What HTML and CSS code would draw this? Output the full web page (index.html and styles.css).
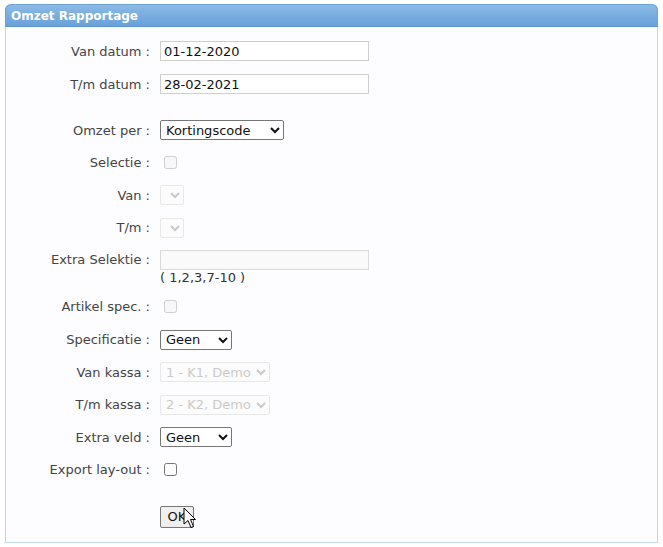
FILE: index.html
```html
<!DOCTYPE html>
<html lang="nl">
<head>
    <meta charset="UTF-8">
    <meta name="viewport" content="width=device-width, initial-scale=1.0">
    <title>Omzet Rapportage</title>
    <link rel="stylesheet" href="styles.css">
</head>
<body>
    <div class="panel">
        <div class="panel-header">Omzet Rapportage</div>

        <form class="panel-body">
            <div class="row row-first">
                <label class="label">Van datum :</label>
                <input class="text-input" type="text" value="01-12-2020">
            </div>
            <div class="row row-space">
                <label class="label">T/m datum :</label>
                <input class="text-input" type="text" value="28-02-2021">
            </div>

            <div class="row">
                <label class="label">Omzet per :</label>
                <select class="select select-omzet">
                    <option>Kortingscode</option>
                </select>
            </div>
            <div class="row">
                <label class="label">Selectie :</label>
                <input type="checkbox" disabled>
            </div>
            <div class="row">
                <label class="label">Van :</label>
                <select class="select select-small" disabled></select>
            </div>
            <div class="row">
                <label class="label">T/m :</label>
                <select class="select select-small" disabled></select>
            </div>
            <div class="row row-top">
                <label class="label">Extra Selektie :</label>
                <div class="field">
                    <input class="text-input" type="text" disabled>
                    <span class="hint">( 1,2,3,7-10 )</span>
                </div>
            </div>
            <div class="row">
                <label class="label">Artikel spec. :</label>
                <input type="checkbox" disabled>
            </div>
            <div class="row">
                <label class="label">Specificatie :</label>
                <select class="select select-geen">
                    <option>Geen</option>
                </select>
            </div>
            <div class="row">
                <label class="label">Van kassa :</label>
                <select class="select select-kassa" disabled>
                    <option>1 - K1, Demo</option>
                </select>
            </div>
            <div class="row">
                <label class="label">T/m kassa :</label>
                <select class="select select-kassa" disabled>
                    <option>2 - K2, Demo</option>
                </select>
            </div>
            <div class="row">
                <label class="label">Extra veld :</label>
                <select class="select select-geen">
                    <option>Geen</option>
                </select>
            </div>
            <div class="row row-space">
                <label class="label">Export lay-out :</label>
                <input type="checkbox">
            </div>

            <div class="row">
                <span class="label"></span>
                <div class="button-wrap">
                    <button class="ok-button" type="button">OK</button>
                    <!-- muisaanwijzer uit de opname -->
                    <svg class="cursor" width="14" height="22" viewBox="0 0 14 22">
                        <path d="M1 1 L1 17 L5 13.5 L8 20.5 L10.5 19.5 L7.5 12.5 L12.5 12.5 Z" fill="#fff" stroke="#000" stroke-width="1" stroke-linejoin="round"/>
                    </svg>
                </div>
            </div>
        </form>
    </div>
</body>
</html>
```

FILE: styles.css
```css
* {
    box-sizing: border-box;
}

body {
    margin: 0;
    font-family: 'DejaVu Sans', Verdana, sans-serif;
    font-size: 13px;
    color: #333;
    background: #fff;
}

.panel {
    margin: 4px 0 0 5px;
    width: 653px;
    height: 539px;
    border: 1px solid #c3d7ea;
    border-top: none;
    border-radius: 6px 6px 0 0;
    background: #fdfdff;
}

.panel-header {
    height: 23px;
    padding: 4px 0 0 5px;
    border-radius: 6px 6px 0 0;
    border: 1px solid #6fa3d6;
    border-bottom-color: #5b93cb;
    background: linear-gradient(to bottom, #8cbbe6 0%, #78ade0 50%, #6aa2d9 100%);
    color: #fff;
    font-weight: bold;
    font-size: 12px;
    margin: 0 -1px;
}

.panel-body {
    padding-top: 14px;
}

.row {
    display: flex;
    align-items: center;
    min-height: 20px;
    margin-bottom: 12.6px;
}

.row-first {
    margin-bottom: 13px;
}

.row-space {
    margin-bottom: 26px;
}

.row-top {
    align-items: flex-start;
    margin-bottom: 11.6px;
}

.row-top .label {
    line-height: 20px;
}

.label {
    width: 144px;
    flex-shrink: 0;
    margin-right: 10px;
    text-align: right;
    color: #444;
}

.field {
    display: flex;
    flex-direction: column;
}

.text-input {
    width: 209px;
    height: 20px;
    margin: 0;
    padding: 1px 3px;
    border: 1px solid #cfcfcf;
    background: #fff;
    font-family: 'DejaVu Sans', Verdana, sans-serif;
    font-size: 13px;
    color: #111;
}

.text-input:disabled {
    background: #fafafa;
    border-color: #dadada;
}

.hint {
    margin-top: 1px;
    line-height: 14px;
    color: #333;
}

.select {
    height: 20px;
    margin: 0;
    padding: 0 1px;
    border: 1px solid #767676;
    border-radius: 2px;
    background: #fff;
    font-family: 'DejaVu Sans', Verdana, sans-serif;
    font-size: 13px;
    color: #111;
}

.select:disabled {
    border-color: #e0e0e0;
    color: #b5b5b5;
    background: #fcfcfc;
}

.select-omzet {
    width: 124px;
}

.select-small {
    width: 24px;
}

.select-geen {
    width: 72px;
}

.select-kassa {
    width: 110px;
}

input[type="checkbox"] {
    margin: 3px 3px 3px 4px;
    width: 13px;
    height: 13px;
}

.button-wrap {
    position: relative;
}

.ok-button {
    width: 34px;
    height: 22px;
    padding: 0;
    border: 1px solid #767676;
    border-radius: 2px;
    background: #efefef;
    font-family: 'DejaVu Sans', Verdana, sans-serif;
    font-size: 13px;
    color: #111;
}

.cursor {
    position: absolute;
    left: 23px;
    top: 1px;
    pointer-events: none;
}
```
